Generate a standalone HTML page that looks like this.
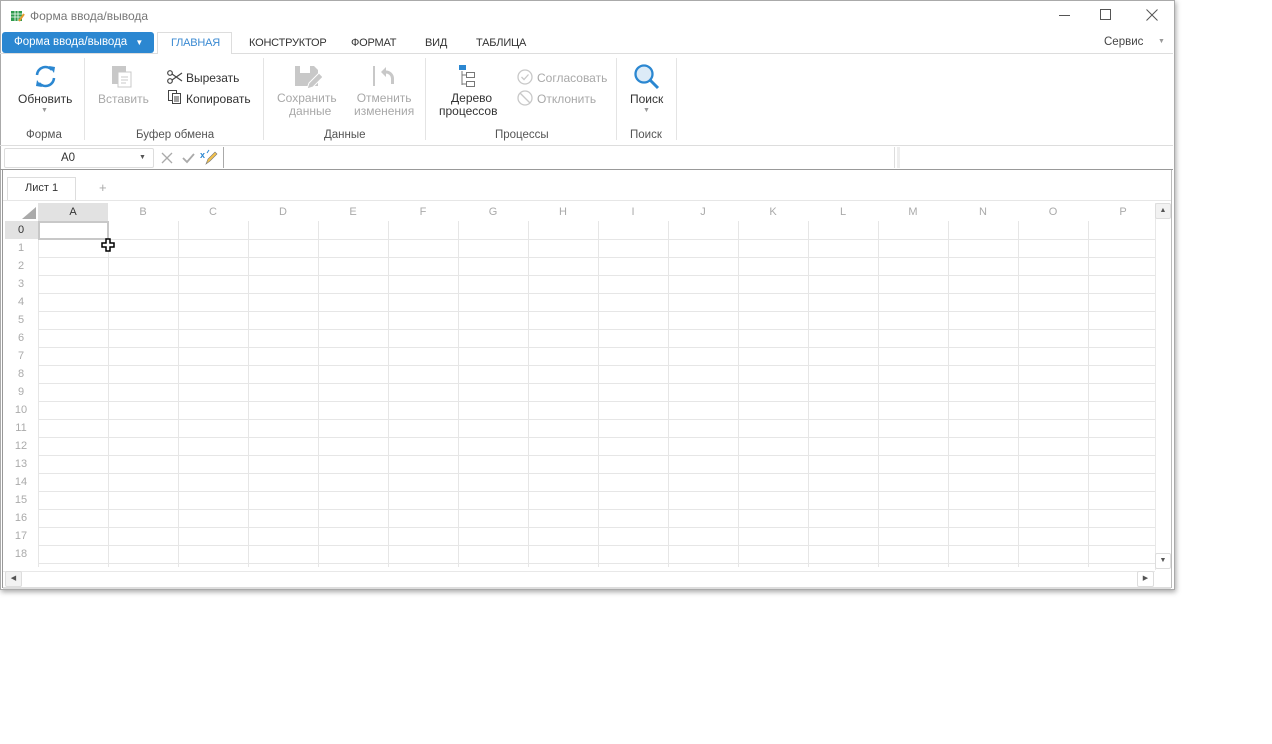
<!DOCTYPE html>
<html><head><meta charset="utf-8"><style>
*{margin:0;padding:0;box-sizing:border-box}
body{width:1272px;height:744px;background:#fff;font-family:"Liberation Sans","DejaVu Sans",sans-serif;font-size:12px;color:#333;position:relative;overflow:hidden}
.a{position:absolute}
.win{left:0;top:0;width:1175px;height:590px;outline:1px solid #aaa;outline-offset:-1px;box-shadow:1px 2px 5px rgba(0,0,0,.35);background:#fff}
.in{position:absolute;left:0;top:1px;width:1175px;height:588px}
.t{white-space:nowrap}
.tab{font-size:11px;letter-spacing:-0.2px}
.gray{color:#a8a8a8}
.grp{color:#555;font-size:11.5px}
.vsep{width:1px;background:#e4e4e4}
.col{color:#aaa;font-size:11px;text-align:center;width:70px}
.rn{color:#aaa;font-size:11px;width:34px;text-align:center;left:4px}
</style></head><body>
<div class="a win"><div class="in">
 <svg class="a" style="left:10px;top:8px" width="15" height="14"><rect x="1" y="2" width="11" height="10" fill="#2e9b4e"/><path d="M1 5h11M1 8h11M5 2v10M8 2v10" stroke="#fff" stroke-width=".8"/><path d="M9 12l5-7" stroke="#e49b2e" stroke-width="2"/></svg>
 <div class="a t" style="left:30px;top:8px;color:#777;font-size:12px">Форма ввода/вывода</div>
 <div class="a" style="left:1059px;top:14px;width:11px;height:1px;background:#555"></div>
 <div class="a" style="left:1100px;top:8px;width:11px;height:11px;border:1px solid #555"></div>
 <svg class="a" style="left:1146px;top:8px" width="12" height="12"><path d="M0.5 .5l11 11M11.5 .5l-11 11" stroke="#555"/></svg>
 <div class="a t" style="left:2px;top:31px;width:152px;height:21px;background:#2b87d1;border-radius:3px;color:#fff;line-height:21px;padding-left:12px;font-size:11.5px">Форма ввода/вывода <span style="font-size:8px;margin-left:5px">▼</span></div>
 <div class="a" style="left:157px;top:31px;width:75px;height:22px;border:1px solid #ddd;border-bottom:none;background:#fff;z-index:2"></div>
 <div class="a t tab" style="left:171px;top:36px;color:#3b8ad2;z-index:3">ГЛАВНАЯ</div>
 <div class="a t tab" style="left:249px;top:36px">КОНСТРУКТОР</div>
 <div class="a t tab" style="left:351px;top:36px">ФОРМАТ</div>
 <div class="a t tab" style="left:425px;top:36px">ВИД</div>
 <div class="a t tab" style="left:476px;top:36px">ТАБЛИЦА</div>
 <div class="a t" style="left:1104px;top:35px;color:#444;font-size:11.5px">Сервис</div>
 <div class="a" style="left:1158px;top:37px;font-size:7px;color:#999">▼</div>
 <div class="a" style="left:0;top:52px;width:1173px;height:1px;background:#ddd"></div>
 <svg class="a" style="left:33px;top:63px" width="25" height="25" viewBox="0 0 25 25"><path d="M4 11a8.5 8.5 0 0 1 15-5" fill="none" stroke="#2b87d1" stroke-width="2.5"/><path d="M21 14a8.5 8.5 0 0 1-15 5" fill="none" stroke="#2b87d1" stroke-width="2.5"/><path d="M16 2l6 1-1 6z M9 23l-6-1 1-6z" fill="#2b87d1"/></svg>
 <div class="a t" style="left:18px;top:91px">Обновить</div>
 <div class="a" style="left:41px;top:106px;font-size:7px;color:#999">▼</div>
 <div class="a grp t" style="left:26px;top:128px">Форма</div>
 <div class="a vsep" style="left:84px;top:57px;height:82px"></div>
 <svg class="a" style="left:111px;top:63px" width="22" height="24"><rect x="1" y="2" width="14" height="18" fill="#c8c8c8"/><rect x="7" y="8" width="13" height="15" fill="#fff" stroke="#c8c8c8"/><path d="M10 13h7M10 16h7M10 19h5" stroke="#c8c8c8"/></svg>
 <div class="a t gray" style="left:98px;top:91px">Вставить</div>
 <svg class="a" style="left:167px;top:69px" width="16" height="14"><circle cx="3" cy="3" r="2.3" fill="none" stroke="#444" stroke-width="1.2"/><circle cx="3" cy="11" r="2.3" fill="none" stroke="#444" stroke-width="1.2"/><path d="M5 4l10 7M5 10l10-7" stroke="#444" stroke-width="1.2"/></svg>
 <div class="a t" style="left:186px;top:70px">Вырезать</div>
 <svg class="a" style="left:168px;top:89px" width="14" height="15"><rect x=".5" y=".5" width="8" height="10" fill="#fff" stroke="#444"/><rect x="4.5" y="3.5" width="8" height="10" fill="#fff" stroke="#444"/><path d="M6 7h5M6 9h5M6 11h5" stroke="#444"/></svg>
 <div class="a t" style="left:186px;top:91px">Копировать</div>
 <div class="a grp t" style="left:136px;top:128px">Буфер обмена</div>
 <div class="a vsep" style="left:263px;top:57px;height:82px"></div>
 <svg class="a" style="left:294px;top:64px" width="28" height="26"><path d="M1 1h19l4 4v16H1z" fill="#c8c8c8"/><rect x="6" y="1" width="10" height="7" fill="#fff"/><path d="M13 24l2-6 10-10 4 4-10 10z" fill="#c8c8c8" stroke="#fff"/></svg>
 <div class="a t gray" style="left:277px;top:91px;text-align:center;line-height:13px">Сохранить<br>&nbsp;&nbsp;данные</div>
 <svg class="a" style="left:372px;top:63px" width="24" height="24"><path d="M2 2v20" stroke="#c8c8c8" stroke-width="2"/><path d="M9 8l5-5v3.5a8 8 0 0 1 8 8V20h-3v-5.5a5 5 0 0 0-5-5V13z" fill="#c8c8c8"/></svg>
 <div class="a t gray" style="left:354px;top:91px;text-align:center;line-height:13px">Отменить<br>изменения</div>
 <div class="a grp t" style="left:324px;top:128px">Данные</div>
 <div class="a vsep" style="left:425px;top:57px;height:82px"></div>
 <svg class="a" style="left:459px;top:64px" width="18" height="23"><rect x="0" y="0" width="7" height="5" fill="#2b87d1"/><path d="M3 6v14M3 10h4M3 19h4" stroke="#777" fill="none"/><rect x="7.5" y="7.5" width="8" height="5" fill="none" stroke="#777"/><rect x="7.5" y="16.5" width="8" height="5" fill="none" stroke="#777"/></svg>
 <div class="a t" style="left:439px;top:91px;text-align:center;line-height:13px">&nbsp;&nbsp;Дерево<br>процессов</div>
 <svg class="a" style="left:517px;top:68px" width="16" height="16"><circle cx="8" cy="8" r="7" fill="none" stroke="#c8c8c8" stroke-width="1.3"/><path d="M4.5 8l2.5 2.5 4.5-5" fill="none" stroke="#c8c8c8" stroke-width="1.3"/></svg>
 <div class="a t gray" style="left:537px;top:70px">Согласовать</div>
 <svg class="a" style="left:517px;top:89px" width="16" height="16"><circle cx="8" cy="8" r="7" fill="none" stroke="#c8c8c8" stroke-width="1.3"/><path d="M3 3l10 10" stroke="#c8c8c8" stroke-width="1.3"/></svg>
 <div class="a t gray" style="left:537px;top:91px">Отклонить</div>
 <div class="a grp t" style="left:495px;top:128px">Процессы</div>
 <div class="a vsep" style="left:616px;top:57px;height:82px"></div>
 <svg class="a" style="left:633px;top:62px" width="28" height="28"><circle cx="11" cy="11" r="8.5" fill="#dcebf7" stroke="#2b87d1" stroke-width="2.3"/><path d="M17 17l8 8" stroke="#2b87d1" stroke-width="3"/></svg>
 <div class="a t" style="left:630px;top:91px">Поиск</div>
 <div class="a" style="left:643px;top:106px;font-size:7px;color:#999">▼</div>
 <div class="a grp t" style="left:630px;top:128px">Поиск</div>
 <div class="a vsep" style="left:676px;top:57px;height:82px"></div>
 <div class="a" style="left:0;top:144px;width:1173px;height:1px;background:#ddd"></div>
 <div class="a" style="left:4px;top:147px;width:150px;height:20px;border:1px solid #ddd;border-radius:2px"></div>
 <div class="a t" style="left:61px;top:151px;font-size:11.5px">A0</div>
 <div class="a" style="left:139px;top:153px;font-size:7px;color:#555">▼</div>
 <svg class="a" style="left:161px;top:151px" width="12" height="12"><path d="M1 1l10 10M11 1L1 11" stroke="#aaa" stroke-width="1.3"/></svg>
 <svg class="a" style="left:182px;top:151px" width="13" height="12"><path d="M1 6l4 4 7-8" fill="none" stroke="#aaa" stroke-width="1.8"/></svg>
 <svg class="a" style="left:200px;top:148px" width="18" height="17"><text x="0" y="9" font-size="9" font-weight="bold" fill="#2b87d1" font-family="Liberation Sans">x</text><path d="M7 4l2-3" stroke="#2b87d1"/><path d="M6 15l2-5 7-7 2 2-7 7z" fill="#f3c14b" stroke="#777" stroke-width=".6"/></svg>
 <div class="a" style="left:223px;top:146px;width:1px;height:21px;background:#aaa"></div>
 <div class="a" style="left:894px;top:146px;width:1px;height:21px;background:#ddd"></div>
 <div class="a" style="left:897px;top:146px;width:3px;height:21px;background:#eee"></div>
 <div class="a" style="left:0;top:168px;width:1173px;height:1px;background:#999"></div>
 <div class="a" style="left:2px;top:169px;width:1px;height:418px;background:#999"></div>
 <div class="a" style="left:1171px;top:169px;width:1px;height:418px;background:#bbb"></div>
 <div class="a" style="left:7px;top:176px;width:69px;height:24px;border:1px solid #ddd;border-bottom:none;background:#fff"></div>
 <div class="a t" style="left:25px;top:181px;font-size:11px;color:#333">Лист 1</div>
 <div class="a t" style="left:99px;top:179px;font-size:13px;color:#aaa">+</div>
 <div class="a" style="left:3px;top:199px;width:1168px;height:1px;background:#e6e6e6"></div>
 <div id="grid" class="a" style="left:0;top:-1px"></div>
 <div class="a" style="left:1155px;top:202px;width:16px;height:367px;background:#fff;border-left:1px solid #e8e8e8"></div>
 <div class="a" style="left:1155px;top:202px;width:16px;height:16px;border:1px solid #ddd;border-radius:2px;background:#f2f2f2;font-size:7px;text-align:center;line-height:14px;color:#555">▲</div>
 <div class="a" style="left:1155px;top:552px;width:16px;height:16px;border:1px solid #ddd;border-radius:2px;background:#fff;font-size:7px;text-align:center;line-height:14px;color:#555">▼</div>
 <div class="a" style="left:3px;top:570px;width:1152px;height:16px;background:#fff;border-top:1px solid #e8e8e8"></div>
 <div class="a" style="left:5px;top:570px;width:17px;height:16px;border:1px solid #ddd;border-radius:2px;background:#f2f2f2;font-size:7px;text-align:center;line-height:14px;color:#555">◀</div>
 <div class="a" style="left:1137px;top:570px;width:17px;height:16px;border:1px solid #ddd;border-radius:2px;background:#fff;font-size:7px;text-align:center;line-height:14px;color:#555">▶</div>
 <div class="a" style="left:3px;top:586px;width:1168px;height:2px;background:#ddd"></div>
</div></div>
<script>
var g=document.getElementById('grid'),h='';
h+='<div class="a" style="left:38px;top:203px;width:70px;height:18px;background:#e2e2e2"></div>';
h+='<svg class="a" style="left:22px;top:207px" width="14" height="12"><path d="M14 0V12H0z" fill="#aaa"/></svg>';
var L='ABCDEFGHIJKLMNOP';
for(var i=0;i<16;i++){var x=38+i*70;
 h+='<div class="a col" style="left:'+x+'px;top:206px;'+(i==0?'color:#333':'')+'">'+L[i]+'</div>';
 h+='<div class="a" style="left:'+(x+70)+'px;top:221px;width:1px;height:349px;background:#e6e6e6"></div>';}
h+='<div class="a" style="left:38px;top:221px;width:1px;height:349px;background:#e6e6e6"></div>';
h+='<div class="a" style="left:5px;top:221px;width:34px;height:18px;background:#e2e2e2"></div>';
for(var r=0;r<20;r++){var y=221+r*18;
 h+='<div class="a rn" style="top:'+(y+3)+'px;'+(r==0?'color:#333':'')+'">'+r+'</div>';
 h+='<div class="a" style="left:38px;top:'+(y+18)+'px;width:1117px;height:1px;background:#e6e6e6"></div>';}
h+='<div class="a" style="left:38px;top:221px;width:71px;height:19px;border:2px solid #c8c8c8"></div>';
h+='<div class="a" style="left:3px;top:567px;width:1152px;height:4px;background:#fff"></div>';
h+='<svg class="a" style="left:101px;top:238px" width="15" height="15"><path d="M5 1h4v4h4v4H9v4H5V9H1V5h4z" fill="#fff" stroke="#000" stroke-width="1.5"/></svg>';
g.innerHTML=h;
</script>
</body></html>
